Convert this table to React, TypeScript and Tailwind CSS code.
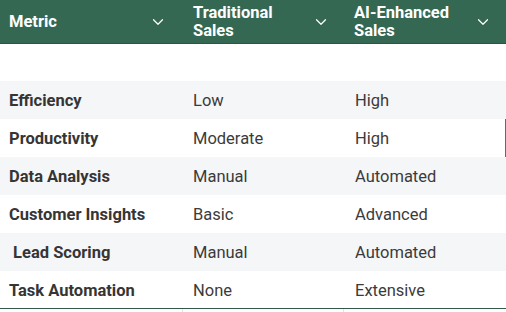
import { ChevronDown } from 'lucide-react'

interface Row {
  metric: string
  traditional: string
  ai: string
}

const ROWS: Row[] = [
  { metric: 'Efficiency', traditional: 'Low', ai: 'High' },
  { metric: 'Productivity', traditional: 'Moderate', ai: 'High' },
  { metric: 'Data Analysis', traditional: 'Manual', ai: 'Automated' },
  { metric: 'Customer Insights', traditional: 'Basic', ai: 'Advanced' },
  { metric: '\u00a0Lead Scoring', traditional: 'Manual', ai: 'Automated' },
  { metric: 'Task Automation', traditional: 'None', ai: 'Extensive' },
]

const COLS = 'grid grid-cols-[183px_161px_162px]'

function HeaderCell({ lines }: { lines: string[] }) {
  return (
    <div className="flex items-center justify-between pl-[10px] pr-[14px]">
      <div className="text-[16.5px] font-bold leading-[18px] text-white">
        {lines.map((l) => (
          <div key={l}>{l}</div>
        ))}
      </div>
      <ChevronDown size={18} strokeWidth={1.6} className="text-white" />
    </div>
  )
}

export default function App() {
  return (
    <div
      className="h-[312px] w-[506px] overflow-hidden bg-white"
      style={{ fontFamily: 'Roboto, "Liberation Sans", sans-serif' }}
    >
      <div className={`${COLS} h-[44px] border-b border-[#2b5645] bg-[#356853]`}>
        <div className="flex items-center justify-between pl-[9px] pr-[16px]">
          <span className="text-[16.5px] font-bold leading-[18px] text-white">Metric</span>
          <ChevronDown size={18} strokeWidth={1.6} className="text-white" />
        </div>
        <HeaderCell lines={['Traditional', 'Sales']} />
        <HeaderCell lines={['AI-Enhanced', 'Sales']} />
      </div>

      <div className="h-[37px]" />

      {/* 행 높이 38px, 짝수 행은 옅은 회색 */}
      {ROWS.map((row, i) => (
        <div
          key={row.metric}
          className={`${COLS} h-[38px] items-center pt-[3px] text-[16.5px] text-[#3b3b3b] ${
            i % 2 === 0 ? 'bg-[#f5f6f8]' : 'bg-white'
          } ${i === 1 ? 'border-r border-[#2f6fd6]' : ''} ${
            i === ROWS.length - 1 ? 'border-b border-[#2e5a47]' : ''
          }`}
        >
          <div className="whitespace-pre pl-[9px] font-bold text-[#353535]">{row.metric}</div>
          <div className="pl-[10px]">{row.traditional}</div>
          <div className="pl-[11px]">{row.ai}</div>
        </div>
      ))}

      <div className={`${COLS} h-[4px]`}>
        <div className="border-r border-[#e2e4e7]" />
        <div className="border-r border-[#e2e4e7]" />
        <div />
      </div>
    </div>
  )
}
